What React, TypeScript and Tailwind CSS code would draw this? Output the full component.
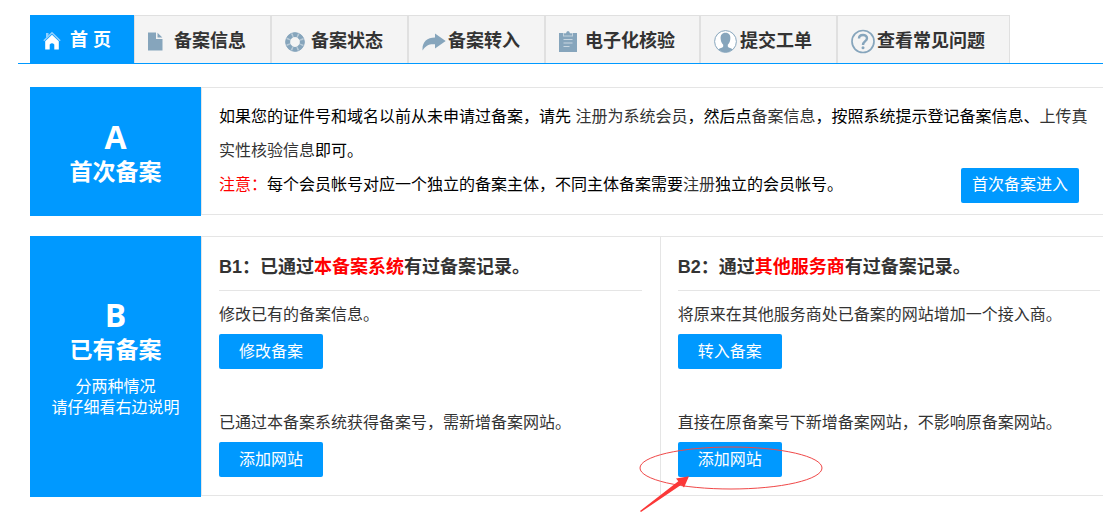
import type { ReactNode } from "react";

const ICON = "#86a5bc";

function HomeIcon() {
  return (
    <svg width="18" height="19" viewBox="0 0 18 19" aria-hidden="true">
      <path d="M3 2 H5.5 V5 L3 7 Z" fill="#8fcfff" />
      <path d="M0.8 9.800 L9 1.800 L17.200 9.800" fill="none" stroke="#8fcfff" strokeWidth="1.500" />
      <path d="M9 3.800 L15.800 10.300 V18.500 H11.300 V13.500 Q9 10.800 6.700 13.500 V18.500 H2.200 V10.300 Z" fill="#fff" />
    </svg>
  );
}

function DocIcon() {
  return (
    <svg width="15" height="19" viewBox="0 0 15 19" aria-hidden="true">
      <path d="M0 0.5 H8 V7 H14.5 V18.5 H0 Z" fill={ICON} />
      <path d="M9.5 0.8 L14.3 5.6 H9.5 Z" fill={ICON} />
    </svg>
  );
}

function RingIcon() {
  return (
    <svg width="20" height="20" viewBox="0 0 20 20" aria-hidden="true">
      <circle cx="10" cy="10" r="7.200" fill="none" stroke="#b9cbd8" strokeWidth="4.600" />
      <circle cx="10" cy="10" r="7.200" fill="none" stroke={ICON} strokeWidth="4.600" strokeDasharray="4.200 1.455" strokeDashoffset="2.100" />
      <circle cx="10" cy="10" r="9.300" fill="none" stroke={ICON} strokeWidth="0.800" />
    </svg>
  );
}

function ArrowIcon() {
  return (
    <svg width="24" height="18" viewBox="0 0 24 18" aria-hidden="true">
      <path d="M13 0.5 L23.7 8 L13 15.5 V11.3 C7.5 10.7 3.5 12.5 0.6 17.5 C-0.2 9.6 4.5 4.6 13 4.5 Z" fill={ICON} />
    </svg>
  );
}

function ClipboardIcon() {
  return (
    <svg width="18" height="21" viewBox="0 0 18 21" aria-hidden="true">
      <path d="M0 2 H18 V21 H0 Z" fill={ICON} />
      <path d="M4 2 H14 V5.5 H4 Z" fill="#c3d2dd" />
      <path d="M5 4.5 V2.5 H7 Q7.3 0 9 0 Q10.700 0 11 2.500 H13 V4.500 Z" fill={ICON} />
      <path d="M4.500 8.500 H13.500 M4.500 12 H13.500 M4.500 15.500 H10.500" stroke="#c9d7e1" strokeWidth="1.200" />
    </svg>
  );
}

function UserIcon() {
  return (
    <svg width="23" height="23" viewBox="0 0 23 23" aria-hidden="true">
      <circle cx="11.5" cy="11.5" r="10.900" fill="#fff" stroke={ICON} strokeWidth="1" />
      <path d="M11.500 2.800 C15 2.800 16.800 5.200 16.300 9.200 C16.100 12 15 13.500 13.800 14.800 V16.500 C14.500 18 17.500 18 18.500 19.500 Q15.500 22.300 11.500 22.300 Q7.500 22.300 4.500 19.500 C5.500 18 8.500 18 9.200 16.500 V14.800 C8 13.500 6.900 12 6.700 9.200 C6.200 5.200 8 2.800 11.500 2.800 Z" fill={ICON} />
    </svg>
  );
}

function HelpIcon() {
  return (
    <svg width="24" height="25" viewBox="0 0 24 25" fill="none" stroke={ICON} aria-hidden="true">
      <circle cx="12" cy="12.500" r="11" strokeWidth="1.700" />
      <path d="M8 9.500 C8 4.800 16 4.800 16 9.300 C16 12.200 12 12.200 12 16" strokeWidth="2.400" />
      <circle cx="12" cy="18.700" r="1.500" fill={ICON} stroke="none" />
    </svg>
  );
}

const tabs: { label: string; icon: ReactNode }[] = [
  { label: "备案信息", icon: <DocIcon /> },
  { label: "备案状态", icon: <RingIcon /> },
  { label: "备案转入", icon: <ArrowIcon /> },
  { label: "电子化核验", icon: <ClipboardIcon /> },
  { label: "提交工单", icon: <UserIcon /> },
  { label: "查看常见问题", icon: <HelpIcon /> },
];

function ActionButton({ children }: { children: ReactNode }) {
  return (
    <button type="button" className="h-[35px] shrink-0 cursor-pointer rounded-xs bg-[#0099ff] px-5 text-white">
      {children}
    </button>
  );
}

function SidePanel({ letter, title, className, children }: { letter: string; title: string; className: string; children?: ReactNode }) {
  return (
    <div className={`w-[171px] shrink-0 bg-[#0099ff] text-center text-white ${className}`}>
      <h2 className="font-bold">
        <span className="block font-['Open_Sans','Noto_Sans_CJK_SC',sans-serif] text-[32px] leading-[35px]">{letter}</span>
        <span className="block text-[23px] leading-9">{title}</span>
      </h2>
      {children}
    </div>
  );
}

function Option({ text, children }: { text: string; children: ReactNode }) {
  return (
    <div>
      <p className="mb-[7px] whitespace-nowrap leading-6">{text}</p>
      {children}
    </div>
  );
}

function CaseHeading({ children }: { children: ReactNode }) {
  return (
    <h3 className="border-b border-[#e5e5e5] pt-[14px] pb-[7px] text-lg leading-8 font-bold whitespace-nowrap">{children}</h3>
  );
}

export default function App() {
  return (
    <div className="min-h-screen bg-white pt-[15px] pb-6 pl-[18px] font-['Liberation_Sans','Noto_Sans_CJK_SC',sans-serif] text-base text-[#333]" lang="zh-CN">
      <nav className="flex border-b border-[#0099ff] pl-3 text-lg font-bold whitespace-nowrap">
        <a href="#" className="flex h-12 items-center bg-[#0099ff] pt-0.5 pr-[23px] text-white">
          <span className="flex w-10 items-center pl-[13px]"><HomeIcon /></span>
          首 页
        </a>
        {tabs.map((tab) => (
          <a key={tab.label} href="#" className="flex h-12 items-center border-x border-t border-[#e0e0e0] bg-[#f4f4f4] pt-0.5 pr-6">
            <span className="flex w-[39px] items-center pt-0.5 pl-[13px]">{tab.icon}</span>
            {tab.label}
          </a>
        ))}
      </nav>

      <main className="pl-3">
        <section className="mt-[23px] flex">
          <SidePanel letter="A" title="首次备案" className="pt-8" />
          <div className="mb-px min-w-0 grow border-y border-l border-[#e5e5e5] py-3 pr-2 pl-[17px] leading-[34px] text-black">
            <p>
              如果您的证件号和域名以前从未申请过备案，请先{" "}
              <a href="#" className="text-[#333]">注册为系统会员</a>，然后点
              <a href="#" className="text-[#333]">备案信息</a>，按照系统提示登记备案信息、
              <a href="#" className="text-[#333]">上传真实性核验信息</a>即可。
            </p>
            <div className="flex h-[34px] items-center justify-between pr-4">
              <p>
                <span className="text-[#ff0000]">注意：</span>每个会员帐号对应一个独立的备案主体，不同主体备案需要
                <a href="#" className="text-[#333]">注册</a>独立的会员帐号。
              </p>
              <button type="button" className="h-[35px] shrink-0 cursor-pointer rounded-xs bg-[#0099ff] px-[11px] leading-6 text-white">
                首次备案进入
              </button>
            </div>
          </div>
        </section>

        <section className="mt-5 flex">
          <SidePanel letter="B" title="已有备案" className="pt-[61px]">
            <p className="mt-2 leading-[21px]">
              分两种情况
              <br />
              请仔细看右边说明
            </p>
          </SidePanel>
          <div className="mb-px grid min-w-0 grow grid-cols-[56fr_54fr] border-y border-l border-[#e5e5e5]">
            <div className="border-r border-[#e5e5e5] pr-[18px] pb-[18px] pl-[17px]">
              <CaseHeading>
                B1：已通过<span className="text-[#ff0000]">本备案系统</span>有过备案记录。
              </CaseHeading>
              <div className="flex flex-col gap-[42px] pt-3">
                <Option text="修改已有的备案信息。">
                  <ActionButton>修改备案</ActionButton>
                </Option>
                <Option text="已通过本备案系统获得备案号，需新增备案网站。">
                  <ActionButton>添加网站</ActionButton>
                </Option>
              </div>
            </div>
            <div className="pr-[3px] pb-[18px] pl-[17px]">
              <CaseHeading>
                B2：通过<span className="text-[#ff0000]">其他服务商</span>有过备案记录。
              </CaseHeading>
              <div className="flex flex-col gap-[42px] pt-3">
                <Option text="将原来在其他服务商处已备案的网站增加一个接入商。">
                  <ActionButton>转入备案</ActionButton>
                </Option>
                <Option text="直接在原备案号下新增备案网站，不影响原备案网站。">
                  <div className="relative flex">
                    <ActionButton>添加网站</ActionButton>
                    <svg
                      className="pointer-events-none absolute top-[3px] -left-10"
                      width="186"
                      height="68"
                      viewBox="0 0 186 68"
                      fill="none"
                      aria-hidden="true"
                    >
                      <ellipse cx="93" cy="23" rx="91" ry="21" stroke="#f04848" strokeWidth="1" />
                      <path d="M2 66 L40.300 36.200 L38 33.500 L51 31.300 L46 42.500 L43.300 39.800 L3 67 Z" fill="#fb3838" />
                    </svg>
                  </div>
                </Option>
              </div>
            </div>
          </div>
        </section>
      </main>
    </div>
  );
}
